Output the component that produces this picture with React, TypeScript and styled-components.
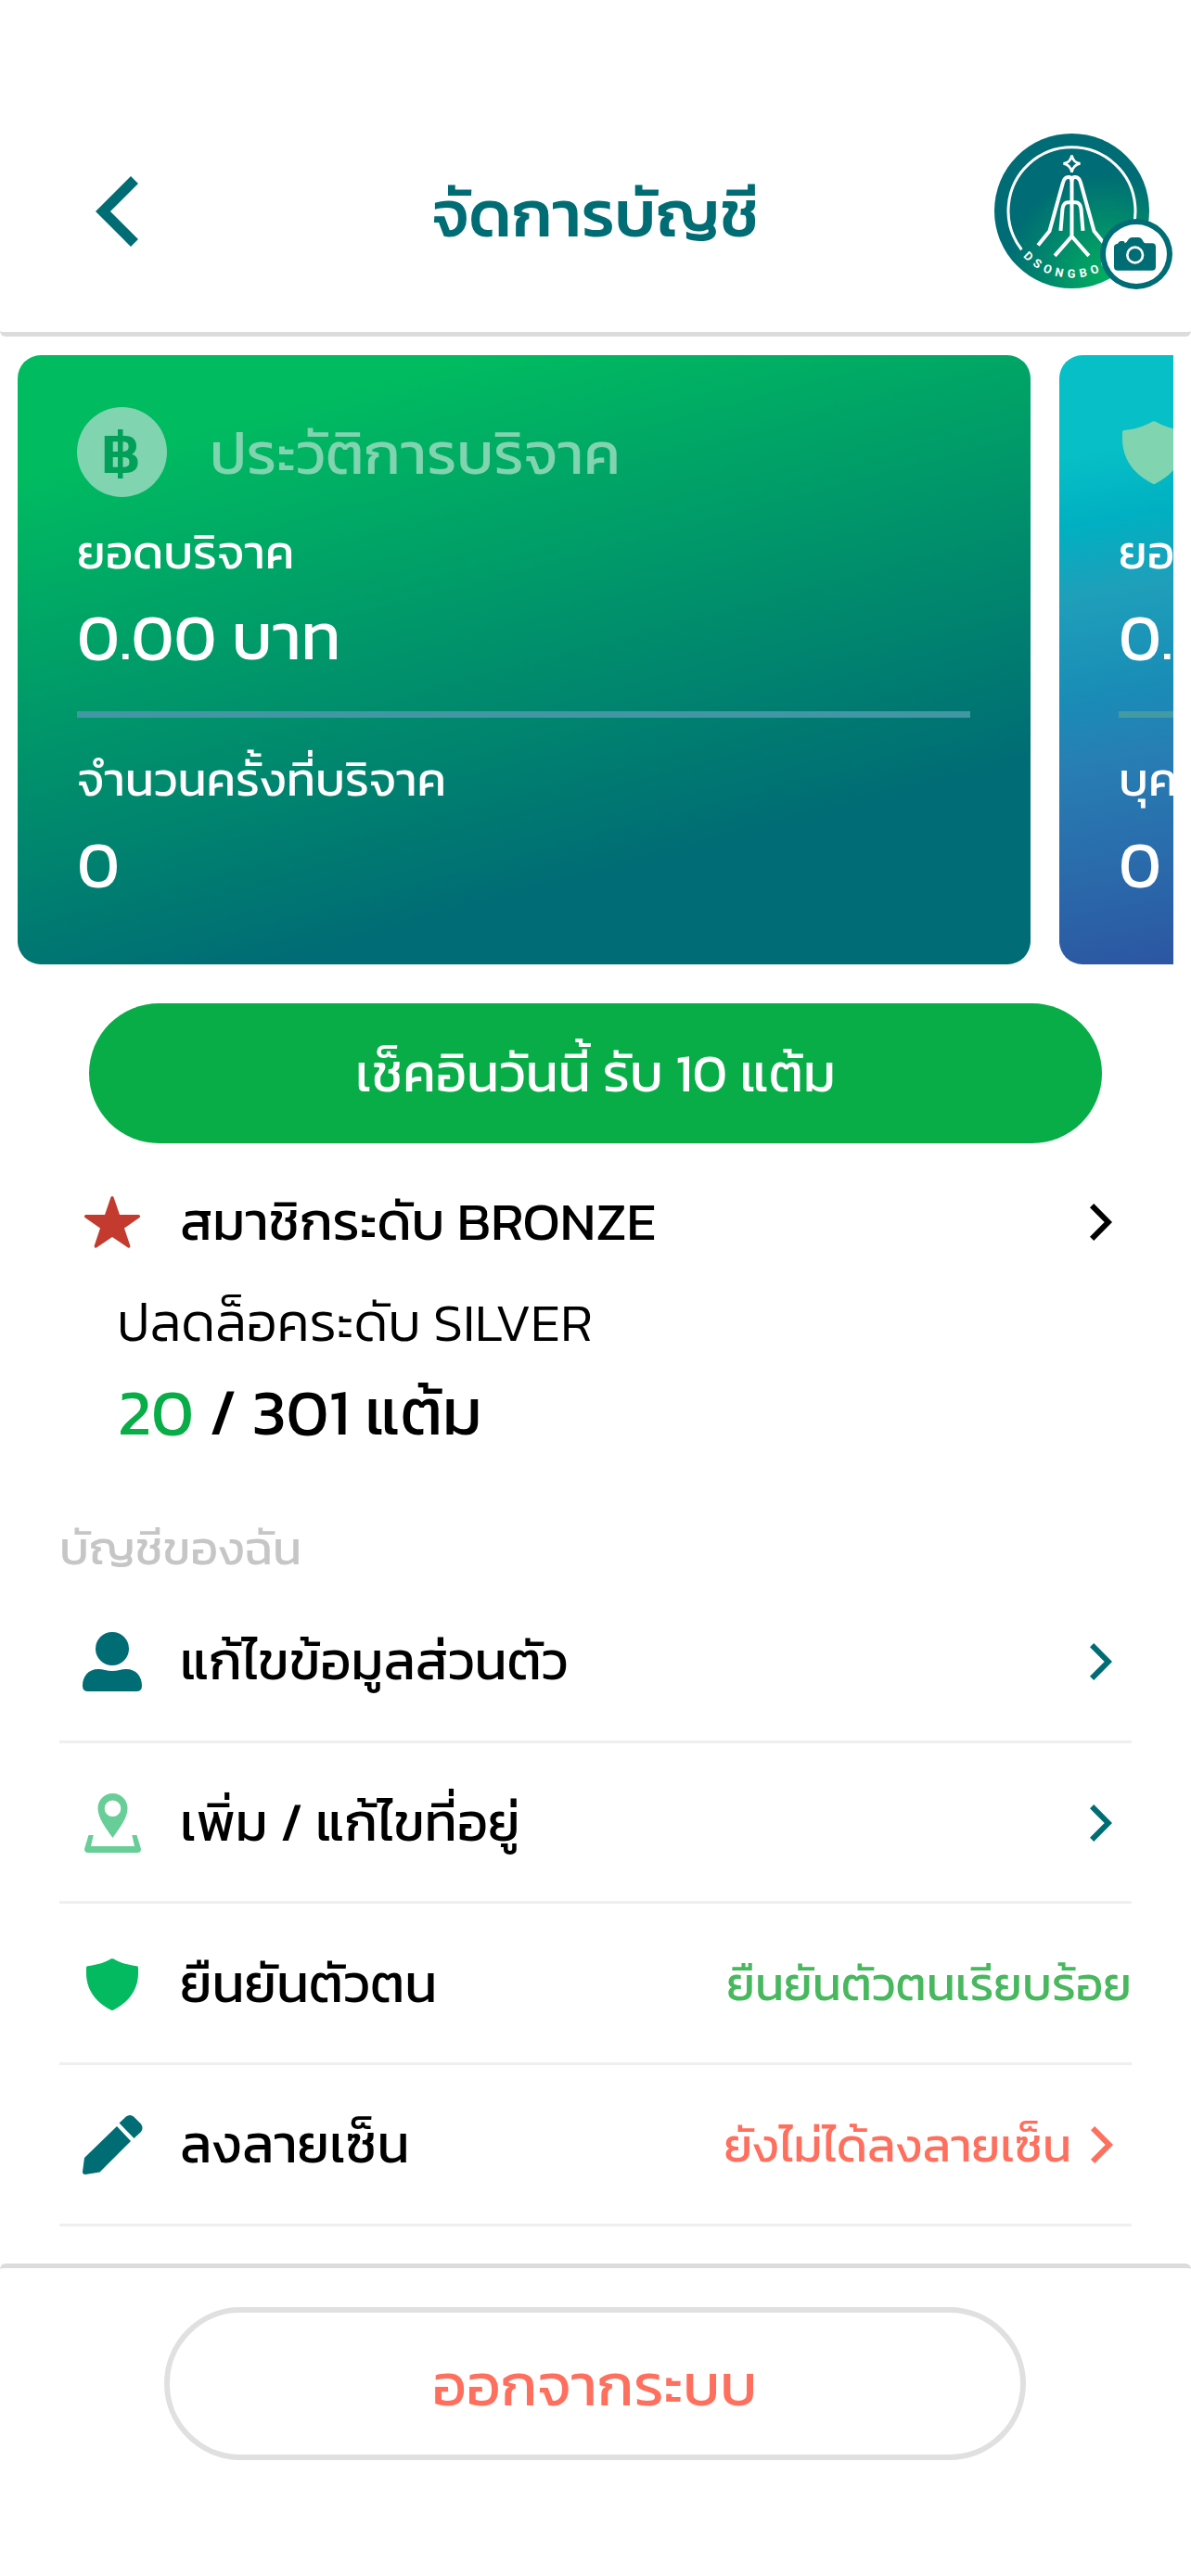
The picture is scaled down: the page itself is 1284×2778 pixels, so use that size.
import { ReactNode } from "react";
import styled, { createGlobalStyle } from "styled-components";

const TEAL = "#006d75";
const GREEN = "#08ad47";
const CORAL = "#ff6f5e";

const Chevron = ({ color }: { color: string }) => (
   <svg width="24" height="40" viewBox="0 0 24 40" fill="none">
      <path d="M2.1 2.1L19.8 20L2.1 37.9" stroke={color} strokeWidth="6" />
   </svg>
);

const UserIcon = () => (
   <svg width="64" height="64" viewBox="0 0 64 64" fill={TEAL}>
      <circle cx="32" cy="18" r="18" />
      <path d="M17 40C22 40 26 42 32 42C38 42 42 40 47 40C58 40 64 48 64 58Q64 64 58 64H6Q0 64 0 58C0 48 6 40 17 40Z" />
   </svg>
);

const PinIcon = () => (
   <svg width="61" height="64" viewBox="0 0 61 64" fill="#68ce98">
      <path
         fillRule="evenodd"
         d="M30.5 0C39.5 0 46.5 7 46.5 16C46.5 27 38 37 30.5 48C23 37 14.5 27 14.5 16C14.5 7 21.5 0 30.5 0ZM30.5 7.5A8.8 8.8 0 1 0 30.5 25.1A8.8 8.8 0 1 0 30.5 7.5Z"
      />
      <path d="M4.5 45H9.7L7 57H54L51.3 45H56.5L61 60Q61 64 57 64H4Q0 64 0 60Z" />
   </svg>
);

const ShieldIcon = ({ size, color }: { size: number; color: string }) => (
   <svg width={size} height={size} viewBox="0 0 56 56" fill={color}>
      <path d="M26.4.6Q28-.3 29.6.6C36 4.5 45 7.4 54.5 8.2Q56 8.5 56 10V16C56 34 45 48 29 55.7Q28 56.2 27 55.7C11 48 0 34 0 16V10Q0 8.5 1.5 8.2C11 7.4 20 4.5 26.4.6Z" />
   </svg>
);

const PencilIcon = () => (
   <svg width="65" height="64" viewBox="0 0 65 64" fill={TEAL}>
      <path d="M2 46L37 12L52 28L18.5 61.5L3 64Q0 64 0 61Z" />
      <path d="M39.5 8.5L47 1.5Q51-1.5 55 1.5L63 9.5Q66 14 63 18L55.5 25Z" />
   </svg>
);

const StarIcon = () => (
   <svg width="60" height="56" viewBox="0 0 60 56" fill="#c23b2e">
      <path d="M28.5 1Q30-.8 31.5 1L38 20H58.5Q61 21 59.5 23L43 34.5L49.5 54Q49 56.5 47 55.5L30 44L13 55.5Q11 56.5 10.5 54L17 34.5L.5 23Q-1 21 1.5 20H22Z" />
   </svg>
);

const CoinIcon = () => (
   <svg width="97" height="97" viewBox="0 0 97 97">
      <circle cx="48.5" cy="48.5" r="48.5" fill="#80d4b0" />
      <text
         x="26"
         y="71"
         fontFamily="Kanit, sans-serif"
         fontSize="61"
         fontWeight="500"
         textLength="42"
         lengthAdjust="spacingAndGlyphs"
         fill="#00a058"
      >
         B
      </text>
      <rect x="44" y="24" width="5.5" height="53" fill="#00a058" />
   </svg>
);

const Logo = () => (
   <svg width="167" height="167" viewBox="0 0 500 500" fill="none">
      <defs>
         <radialGradient id="logo-bg" cx="0.72" cy="0.92" r="0.66">
            <stop offset="0" stopColor="#00ae60" />
            <stop offset="0.3" stopColor="#029a66" />
            <stop offset="1" stopColor="#006c75" />
         </radialGradient>
         <path id="logo-arc" d="M34 250A216 216 0 0 0 466 250" />
      </defs>
      <circle cx="250" cy="250" r="250" fill="url(#logo-bg)" />
      <path d="M88 375A205 205 0 1 1 412 375" stroke="#fff" strokeWidth="9" />
      <path d="M250 70Q254 94 277 97Q254 101 250 125Q246 101 223 97Q246 94 250 70Z" stroke="#fff" strokeWidth="8" />
      <g stroke="#fff" strokeWidth="12" strokeLinejoin="round">
         <path d="M141 361L178 315L221 160Q226 141 239 141Q250 141 250 152Q250 141 261 141Q274 141 279 160L322 315L359 361" />
         <path d="M250 140V330M195 395L250 332L305 395" />
         <path d="M214 314L220 243Q223 222 238 222H262Q277 222 280 243L286 314" />
      </g>
      <text fill="#fff" fontFamily="Roboto, sans-serif" fontSize="38" fontWeight="700">
         <textPath href="#logo-arc" startOffset="50%" textAnchor="middle" textLength="354">
            DSONGBOON
         </textPath>
      </text>
   </svg>
);

const CameraIcon = () => (
   <svg width="45" height="36" viewBox="0 0 135 108" fill={TEAL}>
      <path d="M12 20Q16 12 22 12H30Q34 12 35 19Q41 18 45 8Q50 0 58 0H80Q88 0 92 8Q96 19 104 19H123Q135 19 135 31V95Q135 107 123 107H12Q0 107 0 95V31Q0 22 12 20Z" />
      <circle cx="68" cy="57" r="25" stroke="#fff" strokeWidth="8" />
   </svg>
);

interface Summary {
   title: string;
   label: string;
   countLabel: string;
}

interface MenuItem {
   label: string;
   icon: ReactNode;
   status?: string;
   color: string;
   arrow: boolean;
}

const donation: Summary = {
   title: "ประวัติการบริจาค",
   label: "ยอดบริจาค",
   countLabel: "จำนวนครั้งที่บริจาค",
};

const insurance: Summary = {
   title: "ประวัติประกัน",
   label: "ยอดบริจาค",
   countLabel: "บุคคลที่แนะนำ",
};

const menu: MenuItem[] = [
   { label: "แก้ไขข้อมูลส่วนตัว", icon: <UserIcon />, color: TEAL, arrow: true },
   { label: "เพิ่ม / แก้ไขที่อยู่", icon: <PinIcon />, color: TEAL, arrow: true },
   {
      label: "ยืนยันตัวตน",
      icon: <ShieldIcon size={56} color="#03ba60" />,
      status: "ยืนยันตัวตนเรียบร้อย",
      color: "#48b85e",
      arrow: false,
   },
   {
      label: "ลงลายเซ็น",
      icon: <PencilIcon />,
      status: "ยังไม่ได้ลงลายเซ็น",
      color: CORAL,
      arrow: true,
   },
];

const SummaryCard = ({ data, icon, blue }: { data: Summary; icon: ReactNode; blue?: boolean }) => (
   <Card $blue={blue}>
      <CardHead>
         <CardIcon>{icon}</CardIcon>
         <CardTitle>{data.title}</CardTitle>
      </CardHead>
      <CardLabel>{data.label}</CardLabel>
      <CardValue>0.00 บาท</CardValue>
      <CardRule $blue={blue} />
      <CardLabel>{data.countLabel}</CardLabel>
      <CardValue>0</CardValue>
   </Card>
);

const App = () => {
   return (
      <Page>
         <GlobalStyle />
         <Header>
            <BackButton aria-label="back">
               <svg width="46" height="76" viewBox="0 0 46 76" fill="none">
                  <path d="M42 4L8 38L42 72" stroke={TEAL} strokeWidth="11.3" />
               </svg>
            </BackButton>
            <Title>จัดการบัญชี</Title>
            <Avatar>
               <Logo />
               <CameraBadge>
                  <CameraIcon />
               </CameraBadge>
            </Avatar>
         </Header>

         <Carousel>
            <SummaryCard data={donation} icon={<CoinIcon />} />
            <SummaryCard data={insurance} icon={<ShieldIcon size={68} color="#80d4b0" />} blue />
         </Carousel>

         <CheckIn>เช็คอินวันนี้ รับ 10 แต้ม</CheckIn>

         <LevelRow>
            <IconSlot>
               <StarIcon />
            </IconSlot>
            <RowLabel>สมาชิกระดับ BRONZE</RowLabel>
            <ArrowSlot>
               <Chevron color="#000" />
            </ArrowSlot>
         </LevelRow>
         <Unlock>ปลดล็อคระดับ SILVER</Unlock>
         <Points>
            <em>20</em> / 301 แต้ม
         </Points>

         <SectionTitle>บัญชีของฉัน</SectionTitle>
         <Menu>
            {menu.map((item) => (
               <MenuRow key={item.label}>
                  <IconSlot>{item.icon}</IconSlot>
                  <RowLabel>{item.label}</RowLabel>
                  {item.status && <Status $color={item.color}>{item.status}</Status>}
                  {item.arrow && (
                     <ArrowSlot>
                        <Chevron color={item.color} />
                     </ArrowSlot>
                  )}
               </MenuRow>
            ))}
         </Menu>

         <Footer>
            <LogoutButton>ออกจากระบบ</LogoutButton>
         </Footer>
      </Page>
   );
};

const GlobalStyle = createGlobalStyle`
   * {
      box-sizing: border-box;
   }
   body {
      margin: 0;
      background-color: #fff;
   }
   svg {
      display: block;
      flex-shrink: 0;
   }
   button {
      font: inherit;
      padding: 0;
      border: none;
      background: none;
      cursor: pointer;
   }
`;

const Page = styled.div`
   display: flex;
   flex-direction: column;
   width: 1284px;
   height: 2778px;
   overflow: hidden;
   background-color: #fff;
   color: #000;
   font-family: Kanit, Prompt, "Noto Sans Thai", "Noto Sans", sans-serif;
   white-space: nowrap;
`;

const Header = styled.header`
   display: grid;
   grid-template-columns: 363px 348px 1fr;
   align-items: center;
   height: 363px;
   padding: 97px 45px 0 103px;
   border-bottom: 5px solid #dcdcdc;
   border-radius: 0 0 6px 6px;
   flex-shrink: 0;
`;

const BackButton = styled.button`
   justify-self: start;
`;

const Title = styled.h1`
   margin: 4px 0 0;
   color: ${TEAL};
   font-size: 5.5vw;
   line-height: 80px;
   font-weight: 500;
   text-align: center;
`;

const Avatar = styled.div`
   position: relative;
   justify-self: end;
`;

const CameraBadge = styled.span`
   position: absolute;
   right: -25px;
   bottom: -1px;
   display: flex;
   align-items: center;
   justify-content: center;
   width: 78px;
   height: 76px;
   padding-right: 3px;
   border: 6px solid ${TEAL};
   border-radius: 50%;
   background-color: #fff;
`;

const Carousel = styled.div`
   display: flex;
   gap: 31px;
   margin: 20px 19px 0;
   overflow: hidden;
   flex-shrink: 0;
`;

const Card = styled.section<{ $blue?: boolean }>`
   flex: 0 0 1092px;
   height: 657px;
   padding: 56px 65px 0 64px;
   border-radius: 25px;
   color: #fff;
   background: ${({ $blue }) =>
      $blue
         ? "linear-gradient(170deg, #07bfc6 13%, #00b0c2 22%, #1f9fba 31%, #198cb6 44%, #277fb4 52%, #2a68aa 68%, #2c56a2 80%)"
         : "linear-gradient(165deg, #00bb60 14%, #006c75 77%)"};
`;

const CardHead = styled.div`
   display: flex;
   align-items: center;
   gap: 46px;
   height: 97px;
`;

const CardIcon = styled.div`
   display: flex;
   justify-content: center;
   min-width: 76px;
`;

const CardTitle = styled.h2`
   margin: 0;
   color: #80d4b0;
   font-size: 5vw;
   line-height: 80px;
   font-weight: 400;
`;

const CardLabel = styled.p`
   margin: 29px 0 0;
   font-size: 4vw;
   line-height: 60px;
   font-weight: 400;
`;

const CardValue = styled.p`
   margin: 21px 0 0;
   font-size: 5.5vw;
   line-height: 80px;
   font-weight: 400;
`;

const CardRule = styled.hr<{ $blue?: boolean }>`
   height: 7px;
   margin: 41px 0 36px;
   border: none;
   background-color: ${({ $blue }) => ($blue ? "#439aa2" : "#4297a5")};
`;

const CheckIn = styled.button`
   width: 1092px;
   height: 151px;
   margin: 42px 96px 0;
   padding-bottom: 3px;
   border-radius: 76px;
   background-color: ${GREEN};
   color: #fff;
   font-size: 4.5vw;
   font-weight: 400;
   flex-shrink: 0;
`;

const Row = styled.div`
   display: flex;
   align-items: center;
   flex-shrink: 0;
`;

const LevelRow = styled(Row)`
   height: 100px;
   margin: 35px 64px 0;
`;

const IconSlot = styled.div`
   display: flex;
   justify-content: center;
   width: 114px;
   margin-right: 16px;
`;

const RowLabel = styled.span`
   flex: 1;
   padding-bottom: 2px;
   font-size: 4.5vw;
   line-height: 70px;
   font-weight: 400;
`;

const ArrowSlot = styled.span`
   padding-right: 21px;
`;

const Unlock = styled.p`
   margin: 20px 0 0 126px;
   font-size: 4.5vw;
   line-height: 76px;
   font-weight: 300;
   flex-shrink: 0;
`;

const Points = styled.p`
   margin: 16px 0 0 127px;
   font-size: 5.5vw;
   line-height: 84px;
   font-weight: 400;
   flex-shrink: 0;

   em {
      font-style: normal;
      color: ${GREEN};
   }
`;

const SectionTitle = styled.h3`
   margin: 70px 0 0 64px;
   color: #c6c6c6;
   font-size: 4vw;
   line-height: 70px;
   font-weight: 400;
   flex-shrink: 0;
`;

const Menu = styled.div`
   display: flex;
   flex-direction: column;
   margin: 2px 64px 0;
   flex-shrink: 0;
`;

const MenuRow = styled(Row)`
   height: 173.7px;
   padding-top: 2px;
   border-bottom: 3px solid #efefef;
`;

const Status = styled.span<{ $color: string }>`
   padding-bottom: 1px;
   color: ${({ $color }) => $color};
   font-size: 4vw;
   line-height: 60px;

   & + ${ArrowSlot} {
      padding-left: 21px;
      padding-right: 20px;
   }
`;

const Footer = styled.footer`
   display: flex;
   justify-content: center;
   margin-top: auto;
   height: 337px;
   padding: 42px 2px 0 0;
   border-top: 5px solid #dcdcdc;
   border-radius: 6px 6px 0 0;
   flex-shrink: 0;
`;

const LogoutButton = styled.button`
   width: 929px;
   height: 165px;
   border: 6px solid #e0e0e0;
   border-radius: 83px;
   color: ${CORAL};
   font-size: 5vw;
   font-weight: 400;
`;

export default App;
